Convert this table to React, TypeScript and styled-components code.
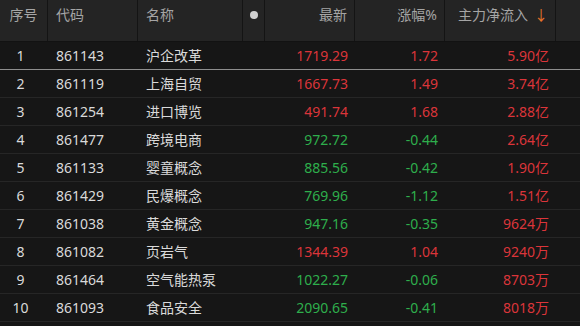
import React from 'react'
import styled, { createGlobalStyle } from 'styled-components'

type Row = {
  code: string
  name: string
  price: string
  pct: string
  flow: string
}

const rows: Row[] = [
  { code: '861143', name: '沪企改革', price: '1719.29', pct: '1.72', flow: '5.90亿' },
  { code: '861119', name: '上海自贸', price: '1667.73', pct: '1.49', flow: '3.74亿' },
  { code: '861254', name: '进口博览', price: '491.74', pct: '1.68', flow: '2.88亿' },
  { code: '861477', name: '跨境电商', price: '972.72', pct: '-0.44', flow: '2.64亿' },
  { code: '861133', name: '婴童概念', price: '885.56', pct: '-0.42', flow: '1.90亿' },
  { code: '861429', name: '民爆概念', price: '769.96', pct: '-1.12', flow: '1.51亿' },
  { code: '861038', name: '黄金概念', price: '947.16', pct: '-0.35', flow: '9624万' },
  { code: '861082', name: '页岩气', price: '1344.39', pct: '1.04', flow: '9240万' },
  { code: '861464', name: '空气能热泵', price: '1022.27', pct: '-0.06', flow: '8703万' },
  { code: '861093', name: '食品安全', price: '2090.65', pct: '-0.41', flow: '8018万' },
]

const COLS = '48px 90px 105px 22px 90px 90px 111px 1fr'

const GlobalStyle = createGlobalStyle`
  html, body {
    margin: 0;
    padding: 0;
    background: #161616;
  }
  body {
    font-family: "Noto Sans", "Noto Sans CJK SC", sans-serif;
    font-size: 14px;
  }
`

const Table = styled.div`
  width: 580px;
  height: 326px;
  overflow: hidden;
  background: #161616;
`

const HeaderRow = styled.div`
  display: grid;
  grid-template-columns: ${COLS};
  height: 42px;
  background: #242424;
  border-bottom: 1px solid #121212;
  box-sizing: border-box;
`

const HeadCell = styled.div<{ $align?: 'left' | 'right' | 'center'; $bare?: boolean }>`
  display: flex;
  align-items: flex-start;
  justify-content: ${(p) =>
    p.$align === 'right' ? 'flex-end' : p.$align === 'center' ? 'center' : 'flex-start'};
  padding: ${(p) => (p.$bare ? '5px 0 0 0' : '5px 7px 0 8px')};
  border-right: 1px solid #141414;
  color: #a5a5a5;
  line-height: 20px;
  white-space: nowrap;

  &:last-child {
    border-right: none;
  }
`

const Dot = styled.span`
  width: 8px;
  height: 8px;
  margin-top: 6px;
  border-radius: 50%;
  background: #cfcfcf;
`

const Arrow = styled.span`
  color: #e8742a;
  margin-left: 6px;
`

const BodyRow = styled.div<{ $active?: boolean }>`
  display: grid;
  grid-template-columns: ${COLS};
  height: 28px;
  box-sizing: border-box;
  border-bottom: 1px solid ${(p) => (p.$active ? '#8e8e8e' : '#262626')};
  align-items: center;
  line-height: 27px;
  white-space: nowrap;
`

const Cell = styled.div<{ $align?: 'left' | 'right' | 'center'; $tone?: 'up' | 'down' | 'plain' }>`
  text-align: ${(p) => p.$align || 'left'};
  padding: ${(p) => (p.$align === 'right' || p.$align === 'center' ? '0 7px 0 0' : '0 0 0 8px')};
  color: ${(p) => (p.$tone === 'up' ? '#db353a' : p.$tone === 'down' ? '#2eae4c' : '#dadada')};
`

const tone = (v: string) => (v.startsWith('-') ? 'down' : 'up')

export default function App() {
  return (
    <>
      <GlobalStyle />
      <Table>
        <HeaderRow>
          <HeadCell $align="center" $bare>序号</HeadCell>
          <HeadCell>代码</HeadCell>
          <HeadCell>名称</HeadCell>
          <HeadCell $align="center" $bare>
            <Dot />
          </HeadCell>
          <HeadCell $align="right">最新</HeadCell>
          <HeadCell $align="right">涨幅%</HeadCell>
          <HeadCell $align="right">
            主力净流入<Arrow>↓</Arrow>
          </HeadCell>
          <HeadCell />
        </HeaderRow>
        {rows.map((r, i) => (
          <BodyRow key={r.code} $active={i === 0}>
            <Cell $align="center">{i + 1}</Cell>
            <Cell>{r.code}</Cell>
            <Cell>{r.name}</Cell>
            <Cell />
            <Cell $align="right" $tone={tone(r.pct)}>{r.price}</Cell>
            <Cell $align="right" $tone={tone(r.pct)}>{r.pct}</Cell>
            <Cell $align="right" $tone={tone(r.flow)}>{r.flow}</Cell>
            <Cell />
          </BodyRow>
        ))}
      </Table>
    </>
  )
}
